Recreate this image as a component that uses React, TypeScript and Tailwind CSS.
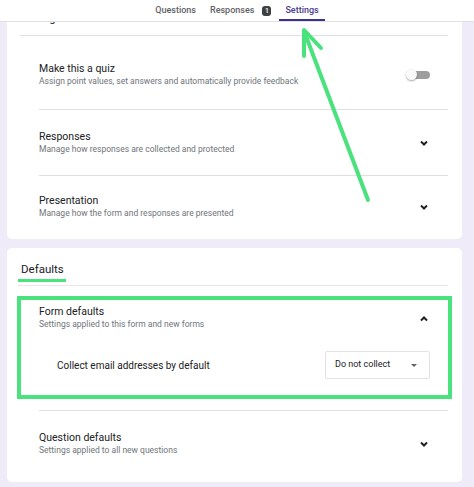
const body = { fontFamily: "Roboto, 'Liberation Sans', sans-serif" };

function Chevron({ up = false }: { up?: boolean }) {
  return (
    <svg width="24" height="24" viewBox="0 0 24 24" className="shrink-0">
      <path
        d={up ? "M9 14.5 L12 11.5 L15 14.5" : "M9 10.5 L12 13.5 L15 10.5"}
        fill="none"
        stroke="#202124"
        strokeWidth="2"
      />
    </svg>
  );
}

function Row({
  title,
  sub,
  pt,
  pb,
  right,
}: {
  title: string;
  sub: string;
  pt: string;
  pb: string;
  right: React.ReactNode;
}) {
  return (
    <div className={`flex items-center justify-between pl-[32px] ${pt} ${pb}`}>
      <div>
        <div className="text-[10.5px] leading-[13px] text-[#202124]">{title}</div>
        <div className="text-[8.5px] leading-[11px] text-[#70757a] mt-[1px]">{sub}</div>
      </div>
      {right}
    </div>
  );
}

export default function App() {
  return (
    <div className="relative w-[474px] h-[487px] overflow-hidden bg-[#f0ebf8]" style={body}>
      {/* tab bar */}
      <div className="sticky top-0 z-10 h-[22px] bg-white border-b border-[#e0e0e0] flex justify-center items-end gap-[2px]">
        <div className="px-[6px] h-[21px] flex items-center text-[9px] font-medium text-[#5f6368]">Questions</div>
        <div className="px-[6px] h-[21px] flex items-center gap-[8px] text-[9px] font-medium text-[#5f6368]">
          Responses
          <span className="w-[9px] h-[10px] rounded-[3px] bg-[#3c4043] text-white text-[7px] leading-[10px] text-center">1</span>
        </div>
        <div className="px-[6px] h-[21px] flex items-center text-[9px] font-medium text-[#4b3b8f] border-b-[2px] border-[#3f318a] pt-[2px]">
          Settings
        </div>
      </div>

      <div className="-mt-[22px] pl-[7px] pr-[12px] flex flex-col gap-[9px]">
        {/* settings card */}
        <div className="bg-white rounded-[5px] pr-[14px]">
          <div className="pt-[12px] pl-[14px] text-[11px] leading-[13px] text-[#202124]">Settings</div>
          <div className="mt-[10px] ml-[13px] border-t border-[#e0e0e0]" />
          <Row
            title="Make this a quiz"
            sub="Assign point values, set answers and automatically provide feedback"
            pt="pt-[26px]"
            pb="pb-[22px]"
            right={
              <div className="relative w-[24px] h-[12px] mr-[18px] flex items-center">
                <div className="ml-[5px] w-[19px] h-[8px] rounded-full bg-[#9e9e9e]" />
                <div className="absolute left-0 top-[0.5px] w-[11px] h-[11px] rounded-full bg-[#fafafa] shadow-[0_1px_2px_rgba(0,0,0,0.35)]" />
              </div>
            }
          />
          <div className="ml-[32px] border-t border-[#e0e0e0]" />
          <Row
            title="Responses"
            sub="Manage how responses are collected and protected"
            pt="pt-[20px]"
            pb="pb-[20px]"
            right={<div className="mr-[12px]"><Chevron /></div>}
          />
          <div className="ml-[32px] border-t border-[#e0e0e0]" />
          <Row
            title="Presentation"
            sub="Manage how the form and responses are presented"
            pt="pt-[18px]"
            pb="pb-[20px]"
            right={<div className="mr-[12px]"><Chevron /></div>}
          />
        </div>

        {/* defaults card */}
        <div className="bg-white rounded-[5px] pb-[26px]">
          <div className="pt-[14px] pl-[14px] text-[11.5px] leading-[14px] text-[#202124]">Defaults</div>
          <div className="mt-[3px] ml-[11px] w-[48px] h-[3px] bg-[#4ae27d]" />
          <div className="mt-[3px] ml-[11px] mr-[14px] border-t border-[#e8e8e8]" />
          <div className="mt-[10px] mx-[10px] border-[4px] border-[#4ae27d]">
            <div className="flex items-center justify-between pl-[18px] pr-[12px] pt-[5px]">
              <div>
                <div className="text-[10.5px] leading-[13px] text-[#202124]">Form defaults</div>
                <div className="text-[8.5px] leading-[11px] text-[#70757a] mt-[1px]">Settings applied to this form and new forms</div>
              </div>
              <Chevron up />
            </div>
            <div className="mt-[21px] pb-[16px] pl-[36px] pr-[18px] flex items-center justify-between">
              <div className="text-[10px] text-[#202124]">Collect email addresses by default</div>
              <div className="w-[105px] h-[28px] border border-[#e3e3e3] rounded-[2px] flex items-center justify-between pl-[9px] pr-[12px]">
                <span className="text-[9px] text-[#202124]">Do not collect</span>
                <span className="w-0 h-0 border-l-[3px] border-r-[3px] border-t-[3px] border-l-transparent border-r-transparent border-t-[#5f6368]" />
              </div>
            </div>
          </div>
          <div className="mt-[11px] ml-[32px] mr-[14px] border-t border-[#e0e0e0]" />
          <Row
            title="Question defaults"
            sub="Settings applied to all new questions"
            pt="pt-[20px]"
            pb="pb-[0px]"
            right={<div className="mr-[26px]"><Chevron /></div>}
          />
        </div>
      </div>

      {/* annotation arrow */}
      <svg className="absolute inset-0 z-20 pointer-events-none" width="474" height="487">
        <g stroke="#4ae27d" strokeWidth="4" strokeLinecap="round" fill="none">
          <path d="M368 200 L304 31" />
          <path d="M304 56 L304 30 L321 48" strokeLinejoin="round" />
        </g>
      </svg>
    </div>
  );
}
